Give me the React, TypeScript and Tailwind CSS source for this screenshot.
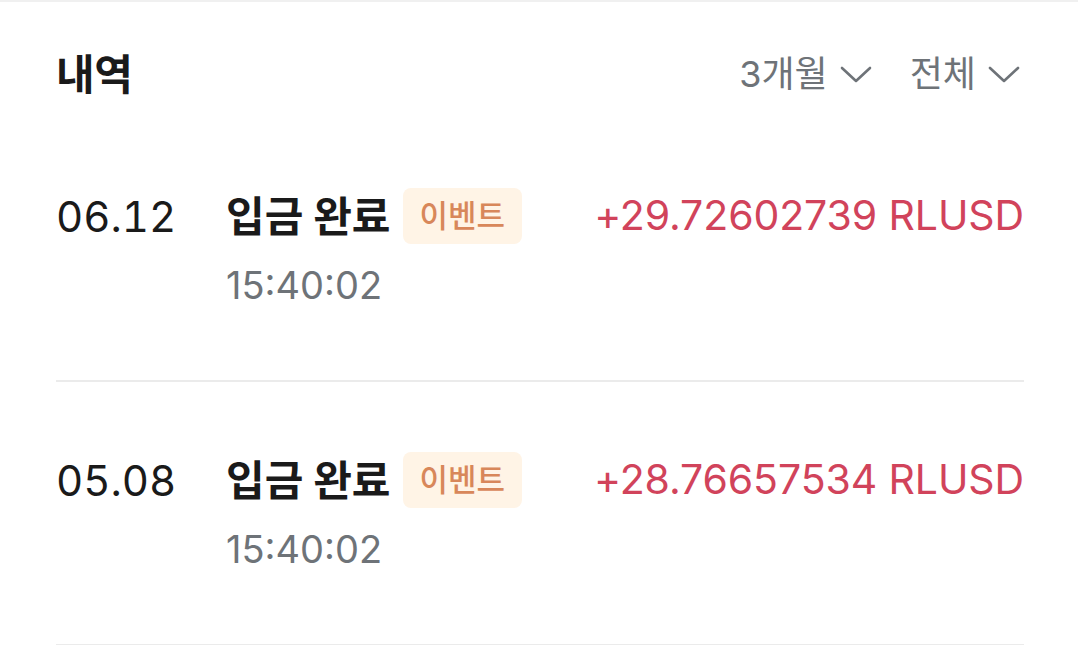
import React from "react";

const font = { fontFamily: 'Inter, "Noto Sans CJK KR", sans-serif' };

function Chevron() {
  return (
    <svg width="36" height="18" viewBox="0 0 36 18" fill="none" className="ml-[12px]">
      <path d="M2 3 L16 16 L30 3" stroke="#6e7378" strokeWidth="2.6" strokeLinecap="round" strokeLinejoin="round" />
    </svg>
  );
}

const rows = [
  { date: "06.12", amount: "+29.72602739 RLUSD", time: "15:40:02" },
  { date: "05.08", amount: "+28.76657534 RLUSD", time: "15:40:02" },
];

export default function App() {
  return (
    <div className="w-[1078px] h-[645px] bg-white overflow-hidden border-t-2 border-[#f0f0f0]" style={font}>
      <div className="pl-[56px] pr-[54px]">
        <div className="h-[116px] flex items-center justify-between pt-[28px]">
          <div className="text-[42px] font-bold text-[#1a1a1a] tracking-[-0.5px]">내역</div>
          <div className="flex items-center text-[#6e7378] text-[36px]">
            <div className="flex items-center">
              <span>3개월</span>
              <Chevron />
            </div>
            <div className="flex items-center ml-[34px]">
              <span>전체</span>
              <Chevron />
            </div>
          </div>
        </div>
        {rows.map((r, i) => (
          <div key={i} className="h-[264px] border-b-2 border-[#ebebeb] pt-[70px] flex">
            <div className="w-[170px] h-[56px] flex items-center text-[42px] text-[#1a1a1a] tabular-nums">{r.date}</div>
            <div className="flex-1 flex flex-col">
              <div className="h-[56px] flex items-center justify-between">
                <div className="flex items-center">
                  <span className="text-[42px] font-bold text-[#1a1a1a]">입금 완료</span>
                  <span className="ml-[12px] h-[56px] px-[17px] rounded-[8px] bg-[#fff4e6] text-[#d8875a] text-[31px] font-medium flex items-center">이벤트</span>
                </div>
                <div className="text-[41px] text-[#d1435b] tracking-[-0.1px]">{r.amount}</div>
              </div>
              <div className="mt-[18px] text-[38px] text-[#6e7378] leading-[46px]">{r.time}</div>
            </div>
          </div>
        ))}
      </div>
    </div>
  );
}
